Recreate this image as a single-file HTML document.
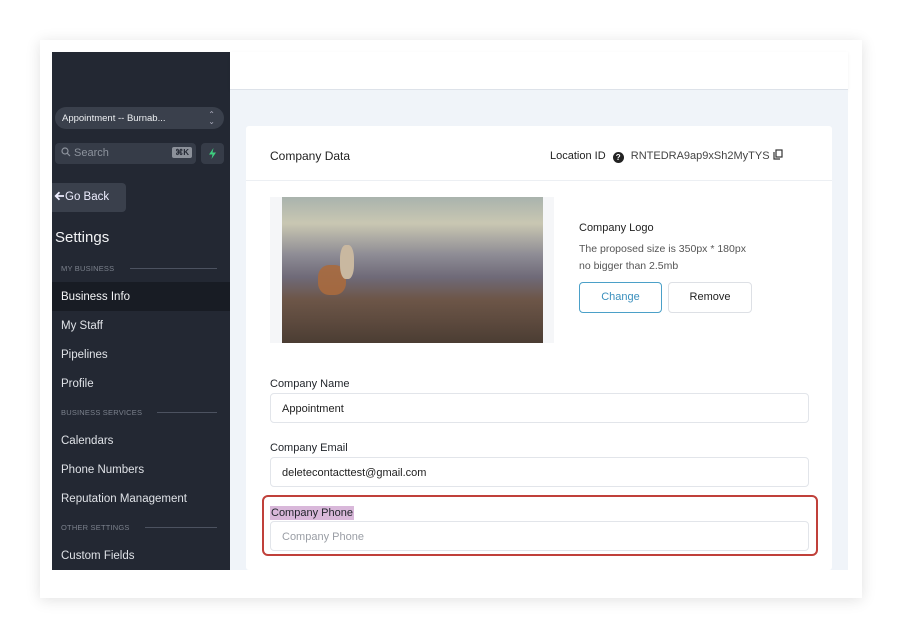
<!DOCTYPE html>
<html><head><style>
*{box-sizing:border-box;margin:0;padding:0}
body{width:902px;height:638px;background:#fff;font-family:"Liberation Sans",sans-serif;position:relative;overflow:hidden}
.a{position:absolute;white-space:nowrap}
.frame{left:40px;top:40px;width:822px;height:558px;background:#fff;box-shadow:0 2px 14px rgba(0,0,0,.12)}
.side{left:52px;top:52px;width:178px;height:518px;background:#232833;color:#e4e6ea}
.nav{position:absolute;left:9px;font-size:11.5px;color:#dfe2e7;white-space:nowrap}
.sec{position:absolute;left:9px;font-size:7.5px;color:#7b818c;letter-spacing:.2px;white-space:nowrap}
.line{position:absolute;height:1px;background:#4c5260}
.lbl{position:absolute;left:270px;font-size:11px;color:#1f2329;white-space:nowrap}
.inp{position:absolute;left:270px;width:539px;height:30px;border:1px solid #e2e5ea;border-radius:4px;background:#fff;font-size:11px;color:#222;padding:9px 11px}
</style></head><body>
<div class="a frame"></div>
<div class="a side">
  <div class="a" style="left:3px;top:55px;width:169px;height:22px;border-radius:11px;background:#3a404c;font-size:9.5px;color:#eceef1;padding:6px 7px">Appointment -- Burnab...<span style="position:absolute;right:9px;top:4px;font-size:8px;color:#aab;line-height:7px">⌃<br>⌄</span></div>
  <div class="a" style="left:3px;top:91px;width:141px;height:21px;border-radius:4px;background:#363c48;font-size:11px;color:#8d939d;padding:4px 6px">
    <svg width="10" height="10" viewBox="0 0 10 10" style="vertical-align:-1px"><circle cx="4" cy="4" r="3" stroke="#8d939d" fill="none" stroke-width="1.2"/><path d="M6.3 6.3L9 9" stroke="#8d939d" stroke-width="1.2"/></svg> Search
    <span style="position:absolute;right:4px;top:4px;background:#8c919a;color:#232833;font-size:8px;font-weight:bold;padding:1px 3px;border-radius:2px">⌘K</span></div>
  <div class="a" style="left:149px;top:91px;width:23px;height:21px;border-radius:4px;background:#363c48">
    <svg width="23" height="21" viewBox="0 0 23 21"><path d="M12.5 5L8 11.5h3.5L10.5 16l4.5-6.5h-3.5z" fill="#3ecf7f"/></svg></div>
  <div class="a" style="left:0;top:131px;width:74px;height:29px;border-radius:0 4px 4px 0;background:#3a404c;font-size:11.5px;color:#eef;padding:8px 2px">
    <svg width="11" height="10" viewBox="0 0 11 10" style="vertical-align:-1px"><path d="M10 5H2M5.5 1.2L1.7 5l3.8 3.8" stroke="#eef" stroke-width="1.8" fill="none"/></svg>Go Back</div>
  <div class="a" style="left:3px;top:177px;font-size:15px;color:#f2f3f5">Settings</div>
  <div class="sec" style="top:212px">MY BUSINESS</div><div class="line" style="left:78px;width:87px;top:216px"></div>
  <div class="a" style="left:0;top:230px;width:178px;height:29px;background:#181c24"></div>
  <div class="nav" style="top:239px;color:#f4f5f7">Business Info</div>
  <div class="nav" style="top:268px">My Staff</div>
  <div class="nav" style="top:297px">Pipelines</div>
  <div class="nav" style="top:326px">Profile</div>
  <div class="sec" style="top:356px">BUSINESS SERVICES</div><div class="line" style="left:105px;width:60px;top:360px"></div>
  <div class="nav" style="top:383px">Calendars</div>
  <div class="nav" style="top:412px">Phone Numbers</div>
  <div class="nav" style="top:441px">Reputation Management</div>
  <div class="sec" style="top:471px">OTHER SETTINGS</div><div class="line" style="left:93px;width:72px;top:475px"></div>
  <div class="nav" style="top:498px">Custom Fields</div>
</div>
<div class="a" style="left:230px;top:52px;width:618px;height:38px;background:#fff;border-bottom:1px solid #dde2e9;box-shadow:0 1px 3px rgba(0,0,0,.06)"></div>
<div class="a" style="left:230px;top:90px;width:618px;height:480px;background:#f0f4f9"></div>
<div class="a" style="left:246px;top:126px;width:586px;height:444px;background:#fff;border-radius:3px"></div>
<div class="a" style="left:246px;top:180px;width:586px;height:1px;background:#eceff3"></div>
<div class="a" style="left:270px;top:149px;font-size:12px;color:#222">Company Data</div>
<div class="a" style="left:550px;top:149px;font-size:11px;color:#222">Location ID <span style="display:inline-block;width:11px;height:11px;border-radius:50%;background:#222;color:#fff;font-size:8px;text-align:center;line-height:11px;font-weight:bold;margin:0 4px;vertical-align:-1px">?</span> <span style="color:#444">RNTEDRA9ap9xSh2MyTYS</span>
<svg width="10" height="11" viewBox="0 0 10 11" style="vertical-align:-1px"><rect x="3" y="1" width="6" height="7" fill="none" stroke="#333" stroke-width="1.2"/><path d="M1 3v7h6" fill="none" stroke="#333" stroke-width="1.2"/></svg></div>
<div class="a" style="left:270px;top:197px;width:284px;height:146px;background:#f5f6f8"></div>
<div class="a" style="left:282px;top:197px;width:261px;height:146px;background:linear-gradient(180deg,#a9b3ad 0%,#c9c7b2 18%,#8d8b94 40%,#6f6a78 55%,#6d5648 70%,#5d4a3e 85%,#4b3d33 100%)"></div>
<div class="a" style="left:318px;top:265px;width:28px;height:30px;background:#a86a3e;border-radius:40%;opacity:.9"></div>
<div class="a" style="left:340px;top:245px;width:14px;height:34px;background:#c9b8a0;border-radius:40%"></div>
<div class="a" style="left:579px;top:222px;font-size:11px;color:#222">Company Logo</div>
<div class="a" style="left:579px;top:241px;font-size:10.5px;color:#555;line-height:17px">The proposed size is 350px * 180px<br>no bigger than 2.5mb</div>
<div class="a" style="left:579px;top:282px;width:83px;height:31px;border:1px solid #4ba0c8;border-radius:4px;color:#3a8fbd;font-size:11px;text-align:center;line-height:29px">Change</div>
<div class="a" style="left:668px;top:282px;width:84px;height:31px;border:1px solid #dde0e5;border-radius:4px;color:#222;font-size:11px;text-align:center;line-height:29px">Remove</div>
<div class="lbl" style="top:378px">Company Name</div>
<div class="inp" style="top:393px">Appointment</div>
<div class="lbl" style="top:442px">Company Email</div>
<div class="inp" style="top:457px">deletecontacttest@gmail.com</div>
<div class="a" style="left:262px;top:495px;width:556px;height:61px;border:2px solid #c0403a;border-radius:6px"></div>
<div class="lbl" style="top:506px;background:#d9b8da;padding:1px 1px;left:270px">Company Phone</div>
<div class="inp" style="top:521px;color:#9a9ea5">Company Phone</div>
</body></html>
